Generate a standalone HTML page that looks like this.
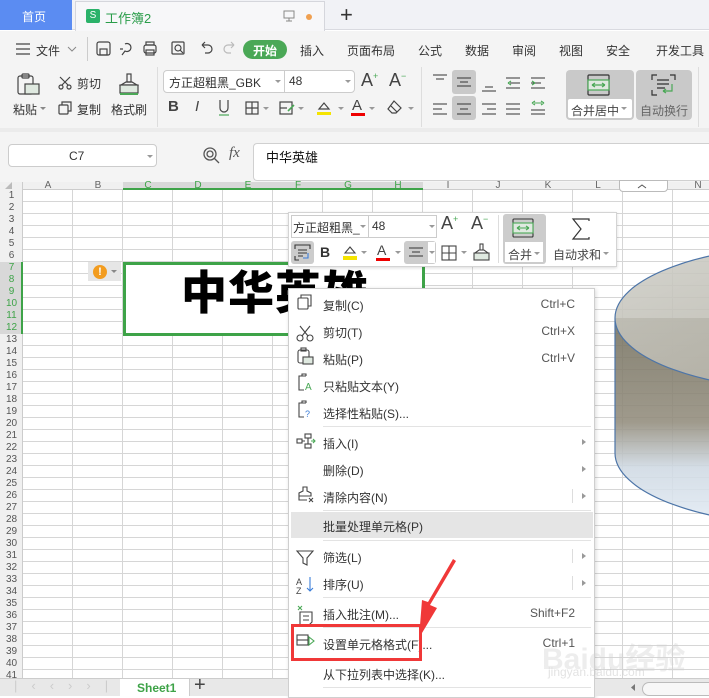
<!DOCTYPE html>
<html><head><meta charset="utf-8">
<style>
*{margin:0;padding:0;box-sizing:border-box}
body{width:709px;height:696px;overflow:hidden;position:relative;background:#fff;font-family:"Liberation Sans","Noto Sans CJK SC",sans-serif;font-size:12px;color:#333}
.a{position:absolute}
.t{position:absolute;white-space:nowrap}
svg{position:absolute;overflow:visible}
.mi{position:absolute;left:0;width:306px;height:27px}
.mi .l{position:absolute;left:34px;top:6px;font-size:12px;color:#333}
.mi .r{position:absolute;right:20px;top:6px;font-size:12px;color:#555}
.mi .ar{position:absolute;right:9px;top:10px;width:0;height:0;border-left:4px solid #999;border-top:3px solid transparent;border-bottom:3px solid transparent}
.mi .vs{position:absolute;right:22px;top:6px;width:1px;height:14px;background:#ddd}
.sep{position:absolute;left:34px;width:268px;height:1px;background:#e3e3e3}
.rn{position:absolute;left:0;width:23px;text-align:center;font-size:10px;color:#555;line-height:12px}
.ch{position:absolute;top:182px;width:50px;text-align:center;font-size:10px;color:#666;line-height:8px}
.tab{position:absolute;top:42px;font-size:12px;color:#333}
</style></head><body>

<!-- title tab bar -->
<div class="a" style="left:0;top:0;width:709px;height:30px;background:#f1f2f6;border-bottom:1px solid #d9dae0"></div>
<div class="a" style="left:0;top:0;width:72px;height:30px;background:#5b8cf2"></div>
<div class="t" style="left:22px;top:8px;color:#fff;font-size:12px">首页</div>
<div class="a" style="left:75px;top:1px;width:250px;height:30px;background:#f7f7f9;border:1px solid #d5d6dc;border-bottom:none"></div>
<div class="a" style="left:86px;top:9px;width:14px;height:14px;background:#2bb26a;border-radius:2px;color:#fff;font-size:10px;text-align:center;line-height:14px">S</div>
<div class="t" style="left:105px;top:8px;color:#2a9d4a;font-size:13px">工作簿2</div>
<svg style="left:283px;top:10px" width="12" height="12"><rect x="1" y="1" width="10" height="7" fill="none" stroke="#888"/><line x1="6" y1="8" x2="6" y2="11" stroke="#888"/><line x1="3" y1="11" x2="9" y2="11" stroke="#888"/></svg>
<div class="a" style="left:306px;top:14px;width:6px;height:6px;border-radius:3px;background:#f0a050"></div>
<div class="t" style="left:340px;top:2px;font-size:22px;color:#333">+</div>

<!-- toolbar area -->
<div class="a" style="left:0;top:31px;width:709px;height:101px;background:#f4f4f4;border-bottom:1px solid #e0e0e0"></div>
<div class="a" style="left:0;top:128px;width:709px;height:4px;background:#ebebeb"></div>
<svg style="left:16px;top:43px" width="14" height="12"><path d="M0 1H14M0 6H14M0 11H14" stroke="#444" stroke-width="1.2"/></svg>
<div class="tab" style="left:36px">文件</div>
<svg style="left:67px;top:46px" width="10" height="6"><path d="M1 1L5 5L9 1" fill="none" stroke="#888"/></svg>
<div class="a" style="left:87px;top:37px;width:1px;height:24px;background:#ccc"></div>
<svg style="left:97px;top:41px" width="140" height="16" fill="none" stroke="#444" stroke-width="1.2">
<rect x="0" y="1" width="13" height="13" rx="2"/><rect x="3" y="8" width="7" height="6"/>
<path d="M28 3a4 4 0 1 1 0 7l-3 4M26 8l-3 0"/>
<rect x="47" y="4" width="12" height="8" rx="2"/><rect x="49" y="1" width="8" height="3"/><rect x="49" y="9" width="8" height="5"/>
<rect x="75" y="1" width="12" height="12" rx="1"/><circle cx="81" cy="7" r="3"/><path d="M83 9l3 3"/>
<path d="M105 4h6a4 4 0 0 1 0 8h-3M105 4l3-3M105 4l3 3"/>
<path d="M137 4h-6a4 4 0 0 0 0 8h3M137 4l-3-3M137 4l-3 3" stroke="#bbb"/>
</svg>
<div class="a" style="left:243px;top:40px;width:44px;height:19px;border-radius:10px;background:#4aa856"></div>
<div class="t" style="left:253px;top:42px;color:#fff;font-size:12px;font-weight:bold">开始</div>
<div class="tab" style="left:300px">插入</div>
<div class="tab" style="left:347px">页面布局</div>
<div class="tab" style="left:418px">公式</div>
<div class="tab" style="left:465px">数据</div>
<div class="tab" style="left:512px">审阅</div>
<div class="tab" style="left:559px">视图</div>
<div class="tab" style="left:606px">安全</div>
<div class="tab" style="left:656px">开发工具</div>

<!-- clipboard group -->
<svg style="left:17px;top:73px" width="24" height="22" fill="none" stroke="#444" stroke-width="1.2"><rect x="1" y="3" width="15" height="18" rx="2"/><rect x="5" y="1" width="7" height="4" rx="1"/><rect x="8" y="11" width="14" height="10" fill="#dfe9e0" stroke="#444"/></svg>
<div class="t" style="left:13px;top:101px;font-size:12px">粘贴</div>
<svg style="left:40px;top:107px" width="6" height="4"><path d="M0 0H6L3 3Z" fill="#888"/></svg>
<svg style="left:58px;top:76px" width="14" height="14" fill="none" stroke="#444" stroke-width="1.2"><circle cx="3" cy="11" r="2"/><circle cx="11" cy="11" r="2"/><path d="M4 9L12 1M10 9L2 1"/></svg>
<div class="t" style="left:77px;top:75px">剪切</div>
<svg style="left:58px;top:101px" width="14" height="14" fill="none" stroke="#444" stroke-width="1.2"><rect x="1" y="4" width="9" height="9" rx="1"/><path d="M4 4V1h9v9h-3"/></svg>
<div class="t" style="left:77px;top:101px">复制</div>
<svg style="left:118px;top:73px" width="22" height="24" fill="none" stroke="#444" stroke-width="1.2"><rect x="9" y="1" width="4" height="8"/><path d="M3 12l5-3h6l5 3z"/><rect x="2" y="12" width="18" height="8" fill="#dfe9e0"/><path d="M2 21H20" stroke="#4aa856" stroke-width="2"/></svg>
<div class="t" style="left:111px;top:101px">格式刷</div>
<div class="a" style="left:157px;top:67px;width:1px;height:60px;background:#ddd"></div>

<!-- font group -->
<div class="a" style="left:163px;top:70px;width:122px;height:23px;background:#fff;border:1px solid #ccc;border-radius:4px 0 0 4px"></div>
<div class="t" style="left:169px;top:74px;font-size:12px">方正超粗黑_GBK</div>
<svg style="left:275px;top:80px" width="6" height="4"><path d="M0 0H6L3 3Z" fill="#999"/></svg>
<div class="a" style="left:284px;top:70px;width:71px;height:23px;background:#fff;border:1px solid #ccc;border-radius:0 4px 4px 0"></div>
<div class="t" style="left:289px;top:74px;font-size:12px">48</div>
<svg style="left:345px;top:80px" width="6" height="4"><path d="M0 0H6L3 3Z" fill="#999"/></svg>
<div class="t" style="left:361px;top:70px;font-size:18px;color:#444">A<sup style="font-size:9px;color:#4aa856">+</sup></div>
<div class="t" style="left:389px;top:70px;font-size:18px;color:#444">A<sup style="font-size:9px;color:#4aa856">−</sup></div>
<div class="t" style="left:168px;top:98px;font-size:15px;font-weight:bold;color:#444">B</div>
<div class="t" style="left:195px;top:98px;font-size:15px;font-style:italic;color:#444">I</div>
<svg style="left:218px;top:100px" width="12" height="16" fill="none" stroke="#444" stroke-width="1.2"><path d="M2 0v8a4 4 0 0 0 8 0V0"/><path d="M1 15h10" stroke="#4aa856"/></svg>
<svg style="left:245px;top:101px" width="14" height="14" fill="none" stroke="#444" stroke-width="1.2"><rect x="1" y="1" width="12" height="12"/><path d="M7 1v12M1 7h12"/></svg>
<svg style="left:263px;top:107px" width="6" height="4"><path d="M0 0H6L3 3Z" fill="#999"/></svg>
<svg style="left:279px;top:101px" width="16" height="14" fill="none" stroke="#444" stroke-width="1.2"><rect x="1" y="1" width="12" height="12"/><path d="M1 7h7"/><path d="M9 10l6-6" stroke="#4aa856" stroke-width="1.6"/></svg>
<svg style="left:298px;top:107px" width="6" height="4"><path d="M0 0H6L3 3Z" fill="#999"/></svg>
<svg style="left:316px;top:100px" width="16" height="16" fill="none" stroke="#444" stroke-width="1.2"><path d="M3 9l5-6 5 6z"/><rect x="1" y="12" width="14" height="3" fill="#f5e400" stroke="none"/></svg>
<svg style="left:338px;top:107px" width="6" height="4"><path d="M0 0H6L3 3Z" fill="#999"/></svg>
<div class="t" style="left:352px;top:97px;font-size:15px;color:#444">A</div>
<div class="a" style="left:351px;top:113px;width:14px;height:3px;background:#e00"></div>
<svg style="left:369px;top:107px" width="6" height="4"><path d="M0 0H6L3 3Z" fill="#999"/></svg>
<svg style="left:387px;top:100px" width="16" height="15" fill="none" stroke="#444" stroke-width="1.2"><path d="M7 1l7 7-5 5H5L1 9z"/><path d="M4 6l6 6"/></svg>
<svg style="left:408px;top:107px" width="6" height="4"><path d="M0 0H6L3 3Z" fill="#999"/></svg>
<div class="a" style="left:421px;top:67px;width:1px;height:60px;background:#ddd"></div>

<!-- align group -->
<div class="a" style="left:452px;top:70px;width:24px;height:24px;background:#c9c9c9;border-radius:3px"></div>
<div class="a" style="left:452px;top:96px;width:24px;height:24px;background:#c9c9c9;border-radius:3px"></div>
<svg style="left:430px;top:72px" width="170" height="50" stroke="#333" stroke-width="1.1" fill="none">
<path d="M3 3h14M6 7h8"/><path d="M27 6h14M30 10h8M27 14h14"/><path d="M55 15h8M52 19h14"/>
<path d="M76 6h14M80 11h10M76 16h14" /><path d="M78 11l3-2M78 11l3 2" stroke="#4aa856"/>
<path d="M101 6h14M101 11h10M101 16h14"/><path d="M105 11l-3-2M105 11l-3 2" stroke="#4aa856"/>
<path d="M3 32h14M3 37h9M3 42h14"/><path d="M27 32h14M30 37h8M27 42h14"/><path d="M52 32h14M57 37h9M52 42h14"/>
<path d="M76 32h14M76 37h14M76 42h14"/><path d="M101 38h14M101 42h14"/><path d="M102 31l3-2M102 31l3 2M114 31l-3-2M114 31l-3 2M104 31h8" stroke="#4aa856"/>
</svg>
<div class="a" style="left:566px;top:70px;width:68px;height:50px;background:#c9c9c9;border-radius:4px"></div>
<div class="a" style="left:568px;top:99px;width:64px;height:19px;background:#fff;border-radius:2px"></div>
<svg style="left:587px;top:74px" width="24" height="22" fill="none" stroke="#333" stroke-width="1.2"><rect x="1" y="1" width="21" height="20" rx="1"/><rect x="1" y="6" width="21" height="10" fill="#dfe9e0" stroke="#4aa856"/><path d="M5 11h13M5 11l3-2M5 11l3 2M18 11l-3-2M18 11l-3 2" stroke="#4aa856"/></svg>
<div class="t" style="left:571px;top:102px;font-size:12px;color:#444">合并居中</div>
<svg style="left:621px;top:107px" width="6" height="4"><path d="M0 0H6L3 3Z" fill="#999"/></svg>
<div class="a" style="left:636px;top:70px;width:56px;height:50px;background:#c9c9c9;border-radius:4px"></div>
<svg style="left:651px;top:74px" width="26" height="22" fill="none" stroke="#333" stroke-width="1.2"><path d="M1 6V1h5M19 1h5v5M1 16v5h5"/><path d="M6 6h12M6 10h12M6 14h8"/><path d="M21 10v7h-9M12 17l3-2M12 17l3 2" stroke="#4aa856"/></svg>
<div class="t" style="left:640px;top:102px;font-size:12px;color:#666">自动换行</div>
<div class="a" style="left:698px;top:67px;width:1px;height:60px;background:#ddd"></div>

<!-- formula bar -->
<div class="a" style="left:0;top:132px;width:709px;height:50px;background:#f4f4f4"></div>
<div class="a" style="left:8px;top:144px;width:149px;height:23px;background:#fff;border:1px solid #ccc;border-radius:4px"></div>
<div class="t" style="left:69px;top:149px;font-size:12px;color:#333">C7</div>
<svg style="left:147px;top:155px" width="6" height="4"><path d="M0 0H6L3 3Z" fill="#999"/></svg>
<svg style="left:203px;top:147px" width="18" height="18" fill="none" stroke="#555" stroke-width="1.3"><circle cx="7" cy="7" r="6"/><circle cx="7" cy="7" r="3"/><path d="M11 11l5 5"/></svg>
<div class="t" style="left:229px;top:145px;font-size:15px;font-style:italic;color:#555;font-family:'Liberation Serif',serif">fx</div>
<div class="a" style="left:253px;top:143px;width:456px;height:38px;background:#fff;border:1px solid #d0d0d0;border-right:none;border-radius:4px 0 0 4px"></div>
<div class="t" style="left:266px;top:147px;font-size:13px;color:#111">中华英雄</div>

<!-- sheet grid -->
<div class="a" style="left:0;top:182px;width:709px;height:8px;background:#f0f0f0;border-bottom:1px solid #ccc"></div>
<div class="a" style="left:0;top:182px;width:23px;height:496px;background:#f0f0f0;border-right:1px solid #ccc"></div>
<div class="a" style="left:123px;top:182px;width:300px;height:8px;background:#d8d8d8;border-bottom:2px solid #3ea348"></div>
<div class="a" style="left:0;top:262px;width:23px;height:72px;background:#d8d8d8;border-right:2px solid #3ea348"></div>
<div class="a" style="left:23px;top:190px;width:686px;height:488px;
background-image:repeating-linear-gradient(to right,transparent 0 49px,#d6d6d6 49px 50px),repeating-linear-gradient(to bottom,transparent 0 11px,#d6d6d6 11px 12px)"></div>
<div class="ch" style="left:23px">A</div><div class="ch" style="left:73px">B</div>
<div class="ch" style="left:123px;color:#3ea348">C</div><div class="ch" style="left:173px;color:#3ea348">D</div>
<div class="ch" style="left:223px;color:#3ea348">E</div><div class="ch" style="left:273px;color:#3ea348">F</div>
<div class="ch" style="left:323px;color:#3ea348">G</div><div class="ch" style="left:373px;color:#3ea348">H</div>
<div class="ch" style="left:423px">I</div><div class="ch" style="left:473px">J</div>
<div class="ch" style="left:523px">K</div><div class="ch" style="left:573px">L</div><div class="ch" style="left:673px">N</div>
<svg style="left:3px;top:182px" width="10" height="8"><path d="M9 0V7H2Z" fill="#bbb"/></svg>
<div class="a" style="left:619px;top:180px;width:49px;height:12px;background:#fff;border:1px solid #bbb;border-radius:0 0 4px 4px"></div>
<svg style="left:637px;top:184px" width="10" height="5"><path d="M1 4L5 1L9 4" fill="none" stroke="#555"/></svg>

<div class="rn" style="top:190px">1</div><div class="rn" style="top:202px">2</div><div class="rn" style="top:214px">3</div><div class="rn" style="top:226px">4</div><div class="rn" style="top:238px">5</div><div class="rn" style="top:250px">6</div>
<div class="rn" style="top:262px;color:#3ea348">7</div><div class="rn" style="top:274px;color:#3ea348">8</div><div class="rn" style="top:286px;color:#3ea348">9</div><div class="rn" style="top:298px;color:#3ea348">10</div><div class="rn" style="top:310px;color:#3ea348">11</div><div class="rn" style="top:322px;color:#3ea348">12</div>
<div class="rn" style="top:334px">13</div><div class="rn" style="top:346px">14</div><div class="rn" style="top:358px">15</div><div class="rn" style="top:370px">16</div><div class="rn" style="top:382px">17</div><div class="rn" style="top:394px">18</div><div class="rn" style="top:406px">19</div><div class="rn" style="top:418px">20</div><div class="rn" style="top:430px">21</div><div class="rn" style="top:442px">22</div><div class="rn" style="top:454px">23</div><div class="rn" style="top:466px">24</div><div class="rn" style="top:478px">25</div><div class="rn" style="top:490px">26</div><div class="rn" style="top:502px">27</div><div class="rn" style="top:514px">28</div><div class="rn" style="top:526px">29</div><div class="rn" style="top:538px">30</div><div class="rn" style="top:550px">31</div><div class="rn" style="top:562px">32</div><div class="rn" style="top:574px">33</div><div class="rn" style="top:586px">34</div><div class="rn" style="top:598px">35</div><div class="rn" style="top:610px">36</div><div class="rn" style="top:622px">37</div><div class="rn" style="top:634px">38</div><div class="rn" style="top:646px">39</div><div class="rn" style="top:658px">40</div><div class="rn" style="top:670px">41</div>

<!-- merged cell -->
<div class="a" style="left:123px;top:262px;width:302px;height:74px;background:#fff;border:3px solid #3ea348"></div>
<div class="t" style="left:181px;top:262px;font-size:46px;font-weight:900;color:#000;letter-spacing:1px;font-family:'Noto Sans CJK SC',sans-serif;line-height:56px">中华英雄</div>
<div class="a" style="left:88px;top:262px;width:33px;height:19px;background:#e6e6e6"></div>
<div class="a" style="left:93px;top:265px;width:14px;height:14px;border-radius:7px;background:#f29c1f;color:#fff;font-size:11px;font-weight:bold;text-align:center;line-height:14px">!</div>
<svg style="left:111px;top:270px" width="6" height="4"><path d="M0 0H6L3 3Z" fill="#888"/></svg>

<!-- cylinder image -->
<svg style="left:0;top:0" width="709" height="696">
<defs>
<linearGradient id="sd" x1="0" y1="0" x2="0" y2="1"><stop offset="0" stop-color="#74705f"/><stop offset="0.5" stop-color="#928c7c"/><stop offset="0.72" stop-color="#cfd9e3"/><stop offset="1" stop-color="#e3ecf5"/></linearGradient>
<linearGradient id="tp" x1="0" y1="0" x2="1" y2="1"><stop offset="0" stop-color="#cfcfc8"/><stop offset="1" stop-color="#aaa69a"/></linearGradient>
</defs>
<path d="M615 318 V453 A200 73 0 0 0 815 526 V318 Z" fill="url(#sd)" opacity="0.88"/>
<ellipse cx="815" cy="318" rx="200" ry="73" fill="url(#tp)" opacity="0.88"/>
<path d="M615 318 A200 73 0 0 1 815 245 M615 318 A200 73 0 0 0 815 391 M615 318 V453 A200 73 0 0 0 815 526" fill="none" stroke="#4d75a8" stroke-width="1.2"/>
</svg>

<!-- mini toolbar -->
<div class="a" style="left:288px;top:212px;width:329px;height:55px;background:#fff;border:1px solid #d4d4d4;box-shadow:0 1px 3px rgba(0,0,0,.15)"></div>
<div class="a" style="left:291px;top:215px;width:146px;height:23px;border:1px solid #ccc;background:#fff"></div>
<div class="a" style="left:368px;top:215px;width:1px;height:23px;background:#ccc"></div>
<div class="t" style="left:293px;top:219px;font-size:12px">方正超粗黑_</div>
<svg style="left:360px;top:225px" width="6" height="4"><path d="M0 0H6L3 3Z" fill="#999"/></svg>
<div class="t" style="left:372px;top:219px;font-size:12px">48</div>
<svg style="left:429px;top:225px" width="6" height="4"><path d="M0 0H6L3 3Z" fill="#999"/></svg>
<div class="t" style="left:441px;top:213px;font-size:18px;color:#444">A<sup style="font-size:9px;color:#4aa856">+</sup></div>
<div class="t" style="left:471px;top:213px;font-size:18px;color:#444">A<sup style="font-size:9px;color:#4aa856">−</sup></div>
<div class="a" style="left:291px;top:241px;width:23px;height:23px;background:#ccc;border-radius:3px"></div>
<svg style="left:294px;top:244px" width="17" height="17" fill="none" stroke="#333" stroke-width="1.1"><path d="M1 5V1h15v4M1 12v4h4"/><path d="M4 6h9M4 9h9M4 12h5"/><path d="M14 9v5h-5" stroke="#3b7dd8"/></svg>
<div class="t" style="left:320px;top:244px;font-size:14px;font-weight:bold;color:#333">B</div>
<svg style="left:342px;top:244px" width="16" height="17" fill="none" stroke="#444" stroke-width="1.1"><path d="M3 9l5-6 5 6z"/><rect x="1" y="12" width="14" height="4" fill="#f5e400" stroke="none"/></svg>
<svg style="left:361px;top:251px" width="6" height="4"><path d="M0 0H6L3 3Z" fill="#999"/></svg>
<div class="t" style="left:377px;top:242px;font-size:14px;color:#444">A</div>
<div class="a" style="left:376px;top:258px;width:14px;height:3px;background:#e00"></div>
<svg style="left:395px;top:251px" width="6" height="4"><path d="M0 0H6L3 3Z" fill="#999"/></svg>
<div class="a" style="left:404px;top:241px;width:32px;height:23px;background:#ccc;border-radius:3px"></div>
<div class="a" style="left:428px;top:242px;width:7px;height:21px;background:#fff"></div>
<svg style="left:408px;top:247px" width="16" height="10" stroke="#333" stroke-width="1.1"><path d="M1 1h14M4 5h8M1 9h14"/></svg>
<svg style="left:429px;top:251px" width="6" height="4"><path d="M0 0H6L3 3Z" fill="#999"/></svg>
<svg style="left:441px;top:245px" width="16" height="16" fill="none" stroke="#444" stroke-width="1.1"><rect x="1" y="1" width="14" height="14"/><path d="M8 1v14M1 8h14"/></svg>
<svg style="left:461px;top:251px" width="6" height="4"><path d="M0 0H6L3 3Z" fill="#999"/></svg>
<svg style="left:473px;top:243px" width="17" height="18" fill="none" stroke="#444" stroke-width="1.1"><rect x="7" y="1" width="3" height="6"/><path d="M2 10l4-3h5l4 3z"/><rect x="1" y="10" width="15" height="7" fill="#dfe9e0"/></svg>
<div class="a" style="left:498px;top:215px;width:1px;height:48px;background:#ddd"></div>
<div class="a" style="left:503px;top:214px;width:43px;height:50px;background:#ccc;border-radius:3px"></div>
<div class="a" style="left:505px;top:242px;width:38px;height:20px;background:#fff"></div>
<svg style="left:512px;top:218px" width="22" height="20" fill="none" stroke="#333" stroke-width="1.1"><rect x="1" y="1" width="20" height="18" rx="1"/><rect x="1" y="5" width="20" height="10" fill="#dfe9e0" stroke="#4aa856"/><path d="M5 10h12M5 10l3-2M5 10l3 2M17 10l-3-2M17 10l-3 2" stroke="#4aa856"/></svg>
<div class="t" style="left:508px;top:246px;font-size:12px;color:#444">合并</div>
<svg style="left:534px;top:252px" width="6" height="4"><path d="M0 0H6L3 3Z" fill="#999"/></svg>
<svg style="left:571px;top:218px" width="20" height="22" fill="none" stroke="#333" stroke-width="1.2"><path d="M18 3V1H2l8 10-8 10h16v-2"/></svg>
<div class="t" style="left:553px;top:246px;font-size:12px;color:#444">自动求和</div>
<svg style="left:603px;top:252px" width="6" height="4"><path d="M0 0H6L3 3Z" fill="#999"/></svg>

<!-- context menu -->
<div class="a" style="left:288px;top:288px;width:307px;height:410px;background:#fff;border:1px solid #cfcfcf;box-shadow:1px 1px 4px rgba(0,0,0,.15)">
<div class="mi" style="top:2px"><div class="l">复制(C)</div><div class="r">Ctrl+C</div></div>
<div class="mi" style="top:29px"><div class="l">剪切(T)</div><div class="r">Ctrl+X</div></div>
<div class="mi" style="top:56px"><div class="l">粘贴(P)</div><div class="r">Ctrl+V</div></div>
<div class="mi" style="top:83px"><div class="l">只粘贴文本(Y)</div></div>
<div class="mi" style="top:110px"><div class="l">选择性粘贴(S)...</div></div>
<div class="sep" style="top:137px"></div>
<div class="mi" style="top:140px"><div class="l">插入(I)</div><div class="ar"></div></div>
<div class="mi" style="top:167px"><div class="l">删除(D)</div><div class="ar"></div></div>
<div class="mi" style="top:194px"><div class="l">清除内容(N)</div><div class="vs"></div><div class="ar"></div></div>
<div class="sep" style="top:221px"></div>
<div class="a" style="left:2px;top:223px;width:302px;height:26px;background:#e5e5e5"></div>
<div class="mi" style="top:223px"><div class="l">批量处理单元格(P)</div></div>
<div class="sep" style="top:251px"></div>
<div class="mi" style="top:254px"><div class="l">筛选(L)</div><div class="vs"></div><div class="ar"></div></div>
<div class="mi" style="top:281px"><div class="l">排序(U)</div><div class="vs"></div><div class="ar"></div></div>
<div class="sep" style="top:308px"></div>
<div class="mi" style="top:311px"><div class="l">插入批注(M)...</div><div class="r">Shift+F2</div></div>
<div class="sep" style="top:338px"></div>
<div class="mi" style="top:341px"><div class="l">设置单元格格式(F)...</div><div class="r">Ctrl+1</div></div>
<div class="mi" style="top:371px"><div class="l">从下拉列表中选择(K)...</div></div>
<div class="sep" style="top:398px"></div>
</div>
<!-- menu icons -->
<svg style="left:296px;top:292px" width="20" height="400" fill="none" stroke="#444" stroke-width="1.1">
<rect x="2" y="6" width="10" height="11" rx="1"/><path d="M5 6V3h10v11h-3"/>
<circle cx="4" cy="46" r="3"/><circle cx="14" cy="46" r="3"/><path d="M6 44L14 34M12 44L4 34"/>
<rect x="2" y="58" width="11" height="13" rx="2"/><rect x="5" y="56" width="5" height="3"/><rect x="7" y="65" width="10" height="7" fill="#dfe9e0"/>
<path d="M10 84H3v14h5M6 84v-2h4v2"/><text x="9" y="98" font-size="10" fill="#4aa856" stroke="none" font-family="Liberation Sans">A</text>
<path d="M10 111H3v14h5M6 111v-2h4v2"/><text x="9" y="125" font-size="9" fill="#3b7dd8" stroke="none" font-family="Liberation Sans">?</text>
<rect x="1" y="147" width="5" height="4"/><rect x="9" y="142" width="6" height="4"/><rect x="9" y="152" width="6" height="4"/><path d="M6 149h3M12 146v6"/><path d="M15 149h4M17 147l2 2-2 2" stroke="#4aa856"/>
<path d="M7 195h4v4l4 2v3H3v-3l4-2z M3 204v4h8"/><path d="M13 206l4 4M17 206l-4 4" stroke="#444"/>
<path d="M1 259h16l-6 7v7l-4-2v-5z"/>
<text x="0" y="293" font-size="9" fill="#444" stroke="none" font-family="Liberation Sans">A</text><text x="0" y="302" font-size="9" fill="#444" stroke="none" font-family="Liberation Sans">Z</text><path d="M14 285v14M11 296l3 3 3-3" stroke="#3b7dd8"/>
<path d="M4 320h12v10l-3 3H4z M7 324h6M7 328h6"/><path d="M2 314l4 4M6 314l-4 4" stroke="#4aa856"/>
<rect x="1" y="343" width="11" height="10"/><path d="M1 348h11"/><path d="M13 345l5 4-5 4z" stroke="#4aa856"/>
</svg>

<!-- red highlight -->
<div class="a" style="left:291px;top:624px;width:131px;height:37px;border:3px solid #f03838"></div>
<svg style="left:0;top:0" width="709" height="696"><path d="M456 561 L430 605 L437 608 L419 638 L422 600 L428 602 L453 559 Z" fill="#f03838"/></svg>

<!-- bottom sheet bar -->
<div class="a" style="left:0;top:678px;width:288px;height:18px;background:#e8e8e8;border-top:1px solid #ccc"></div>
<div class="a" style="left:595px;top:678px;width:114px;height:18px;background:#e8e8e8;border-top:1px solid #ccc"></div>
<div class="t" style="left:14px;top:678px;font-size:13px;color:#ccc;letter-spacing:14px">|‹‹››|</div>
<div class="a" style="left:120px;top:679px;width:70px;height:17px;background:#fff;border-right:1px solid #ccc"></div>
<div class="t" style="left:137px;top:681px;font-size:12px;font-weight:bold;color:#3ea348">Sheet1</div>
<div class="t" style="left:194px;top:674px;font-size:20px;color:#444">+</div>
<div class="a" style="left:642px;top:682px;width:67px;height:14px;border:1px solid #bbb;border-right:none;border-radius:7px 0 0 7px;background:#f7f7f7"></div>
<svg style="left:630px;top:684px" width="6" height="8"><path d="M5 0V7L1 3.5Z" fill="#777"/></svg>

<!-- watermark -->
<div class="t" style="left:542px;top:634px;font-size:30px;font-weight:bold;color:rgba(210,210,210,.4)">Baidu经验</div>
<div class="t" style="left:548px;top:665px;font-size:12px;color:rgba(200,200,200,.5)">jingyan.baidu.com</div>
</body></html>
